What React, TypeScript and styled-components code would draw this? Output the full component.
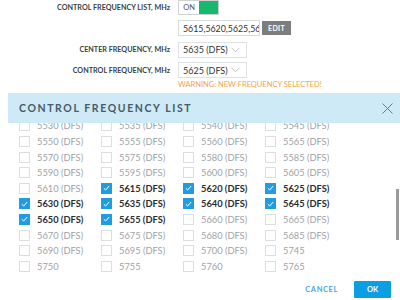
import { useEffect, useRef } from "react";
import styled, { createGlobalStyle } from "styled-components";

const GlobalStyle = createGlobalStyle`
  html, body {
    margin: 0;
    padding: 0;
    background: #fff;
    font-family: Lato, "Open Sans", sans-serif;
    overflow: hidden;
  }
`;

const Page = styled.div`
  width: 400px;
  height: 300px;
  display: flex;
  flex-direction: column;
  overflow: hidden;
`;

const Form = styled.div`
  display: grid;
  grid-template-columns: 170px 1fr;
  column-gap: 8px;
  align-items: center;
  height: 93px;
  flex-shrink: 0;
  align-content: start;
`;

const Label = styled.div<{ $top?: boolean }>`
  text-align: right;
  font-size: 7.2px;
  font-weight: 700;
  color: #3b3f44;
  align-self: ${(p) => (p.$top ? "start" : "center")};
  margin-top: ${(p) => (p.$top ? "3px" : "0")};
`;

const Field = styled.div<{ $h: number; $top?: boolean }>`
  height: ${(p) => p.$h}px;
  display: flex;
  align-items: ${(p) => (p.$top ? "flex-start" : "center")};
  gap: 2px;
`;

const Toggle = styled.div`
  display: flex;
  width: 41px;
  height: 15px;
  border: 1px solid #cfd3d6;
  box-sizing: border-box;
`;

const ToggleOn = styled.div`
  width: 20px;
  font-size: 7.5px;
  color: #555;
  display: flex;
  align-items: center;
  justify-content: center;
`;

const ToggleKnob = styled.div`
  flex: 1;
  background: #18b86c;
`;

const TextInput = styled.div`
  width: 82px;
  height: 16px;
  box-sizing: border-box;
  border: 1px solid #d9dcdf;
  font-size: 8.8px;
  color: #333;
  padding-left: 4px;
  display: flex;
  align-items: center;
  overflow: hidden;
  white-space: nowrap;
`;

const EditButton = styled.div`
  width: 29px;
  height: 14px;
  background: #7b7d7f;
  color: #fff;
  font-size: 7px;
  font-weight: 700;
  display: flex;
  align-items: center;
  justify-content: center;
  letter-spacing: 0.3px;
`;

const Select = styled.div`
  width: 69px;
  height: 16px;
  box-sizing: border-box;
  border: 1px solid #dfe2e4;
  font-size: 9px;
  color: #333;
  padding: 0 6px 0 4px;
  display: flex;
  align-items: center;
  justify-content: space-between;
`;

const Warning = styled.div`
  grid-column: 2;
  font-size: 7.5px;
  color: #f5a24c;
  height: 8px;
  display: flex;
  align-items: center;
`;

const Dialog = styled.div`
  margin-left: 8px;
  flex: 1;
  display: flex;
  flex-direction: column;
  min-height: 0;
  background: #fff;
`;

const DialogHeader = styled.div`
  height: 30px;
  flex-shrink: 0;
  background: #cdeaf6;
  display: flex;
  align-items: center;
  justify-content: space-between;
  padding: 0 7px 0 11px;
`;

const Title = styled.div`
  font-size: 10.5px;
  font-weight: 700;
  letter-spacing: 1.6px;
  color: #4a5966;
`;

const BodyWrap = styled.div`
  position: relative;
  height: 152px;
  flex-shrink: 0;
`;

const Body = styled.div`
  height: 100%;
  overflow-y: scroll;
  scrollbar-width: none;
  &::-webkit-scrollbar {
    display: none;
  }
`;

const Thumb = styled.div`
  position: absolute;
  right: 1px;
  width: 3px;
  background: #9b9b9b;
`;

const Grid = styled.div`
  display: grid;
  grid-template-columns: repeat(4, 82px);
  grid-auto-rows: 15.6px;
  padding: 4px 0 0 11px;
`;

const Item = styled.div<{ $on: boolean }>`
  display: flex;
  align-items: center;
  gap: 7px;
  font-size: 9.3px;
  color: ${(p) => (p.$on ? "#2a2d30" : "#a0a3a6")};
  font-weight: ${(p) => (p.$on ? 700 : 400)};
  white-space: nowrap;
`;

const Box = styled.div<{ $on: boolean }>`
  width: 11px;
  height: 11px;
  box-sizing: border-box;
  border: 1px solid ${(p) => (p.$on ? "#1e9de2" : "#dcdfe1")};
  background: ${(p) => (p.$on ? "#1e9de2" : "#fff")};
  display: flex;
  align-items: center;
  justify-content: center;
  flex-shrink: 0;
`;

const Footer = styled.div`
  flex: 1;
  display: flex;
  align-items: center;
  justify-content: flex-end;
  gap: 16px;
  padding: 4px 9px 0 0;
`;

const CancelButton = styled.div`
  font-size: 7.5px;
  font-weight: 700;
  letter-spacing: 0.6px;
  color: #4aa9e2;
`;

const OkButton = styled.div`
  width: 37px;
  height: 17px;
  background: #0b9ee3;
  color: #fff;
  font-size: 7.5px;
  font-weight: 700;
  display: flex;
  align-items: center;
  justify-content: center;
  border-radius: 1px;
`;

const Chevron = () => (
  <svg width="9" height="6" viewBox="0 0 9 6">
    <path d="M0.5 0.8 L4.5 4.8 L8.5 0.8" fill="none" stroke="#b9bdc0" strokeWidth="0.9" />
  </svg>
);

const Check = () => (
  <svg width="7" height="6" viewBox="0 0 7 6">
    <path d="M0.8 3.2 L2.7 5 L6.2 1" fill="none" stroke="#fff" strokeWidth="1" />
  </svg>
);

const Close = () => (
  <svg width="11" height="11" viewBox="0 0 11 11">
    <path d="M0.5 0.5 L10.5 10.5 M10.5 0.5 L0.5 10.5" stroke="#6f7a82" strokeWidth="1" />
  </svg>
);

const selected = [5615, 5620, 5625, 5630, 5635, 5640, 5645, 5650, 5655];

const freqs: number[] = [];
for (let f = 5290; f <= 5700; f += 5) freqs.push(f);
for (let f = 5745; f <= 5880; f += 5) freqs.push(f);

const SCROLL_TOP = 196;

export default function App() {
  const bodyRef = useRef<HTMLDivElement>(null);

  useEffect(() => {
    if (bodyRef.current) bodyRef.current.scrollTop = SCROLL_TOP;
  }, []);

  return (
    <Page>
      <GlobalStyle />
      <Form>
        <Label $top>CONTROL FREQUENCY LIST, MHz</Label>
        <Field $h={17} $top>
          <Toggle>
            <ToggleOn>ON</ToggleOn>
            <ToggleKnob />
          </Toggle>
        </Field>
        <div />
        <Field $h={22}>
          <TextInput>5615,5620,5625,5630</TextInput>
          <EditButton>EDIT</EditButton>
        </Field>
        <Label>CENTER FREQUENCY, MHz</Label>
        <Field $h={21}>
          <Select>
            5635 (DFS)
            <Chevron />
          </Select>
        </Field>
        <Label>CONTROL FREQUENCY, MHz</Label>
        <Field $h={20}>
          <Select>
            5625 (DFS)
            <Chevron />
          </Select>
        </Field>
        <Warning>WARNING: NEW FREQUENCY SELECTED!</Warning>
      </Form>
      <Dialog>
        <DialogHeader>
          <Title>CONTROL FREQUENCY LIST</Title>
          <Close />
        </DialogHeader>
        <BodyWrap>
          <Body ref={bodyRef}>
            <Grid>
              {freqs.map((f) => {
                const on = selected.includes(f);
                return (
                  <Item key={f} $on={on}>
                    <Box $on={on}>{on && <Check />}</Box>
                    {f <= 5700 ? `${f} (DFS)` : `${f}`}
                  </Item>
                );
              })}
            </Grid>
          </Body>
          <Thumb style={{ top: 66, height: 51 }} />
        </BodyWrap>
        <Footer>
          <CancelButton>CANCEL</CancelButton>
          <OkButton>OK</OkButton>
        </Footer>
      </Dialog>
    </Page>
  );
}
